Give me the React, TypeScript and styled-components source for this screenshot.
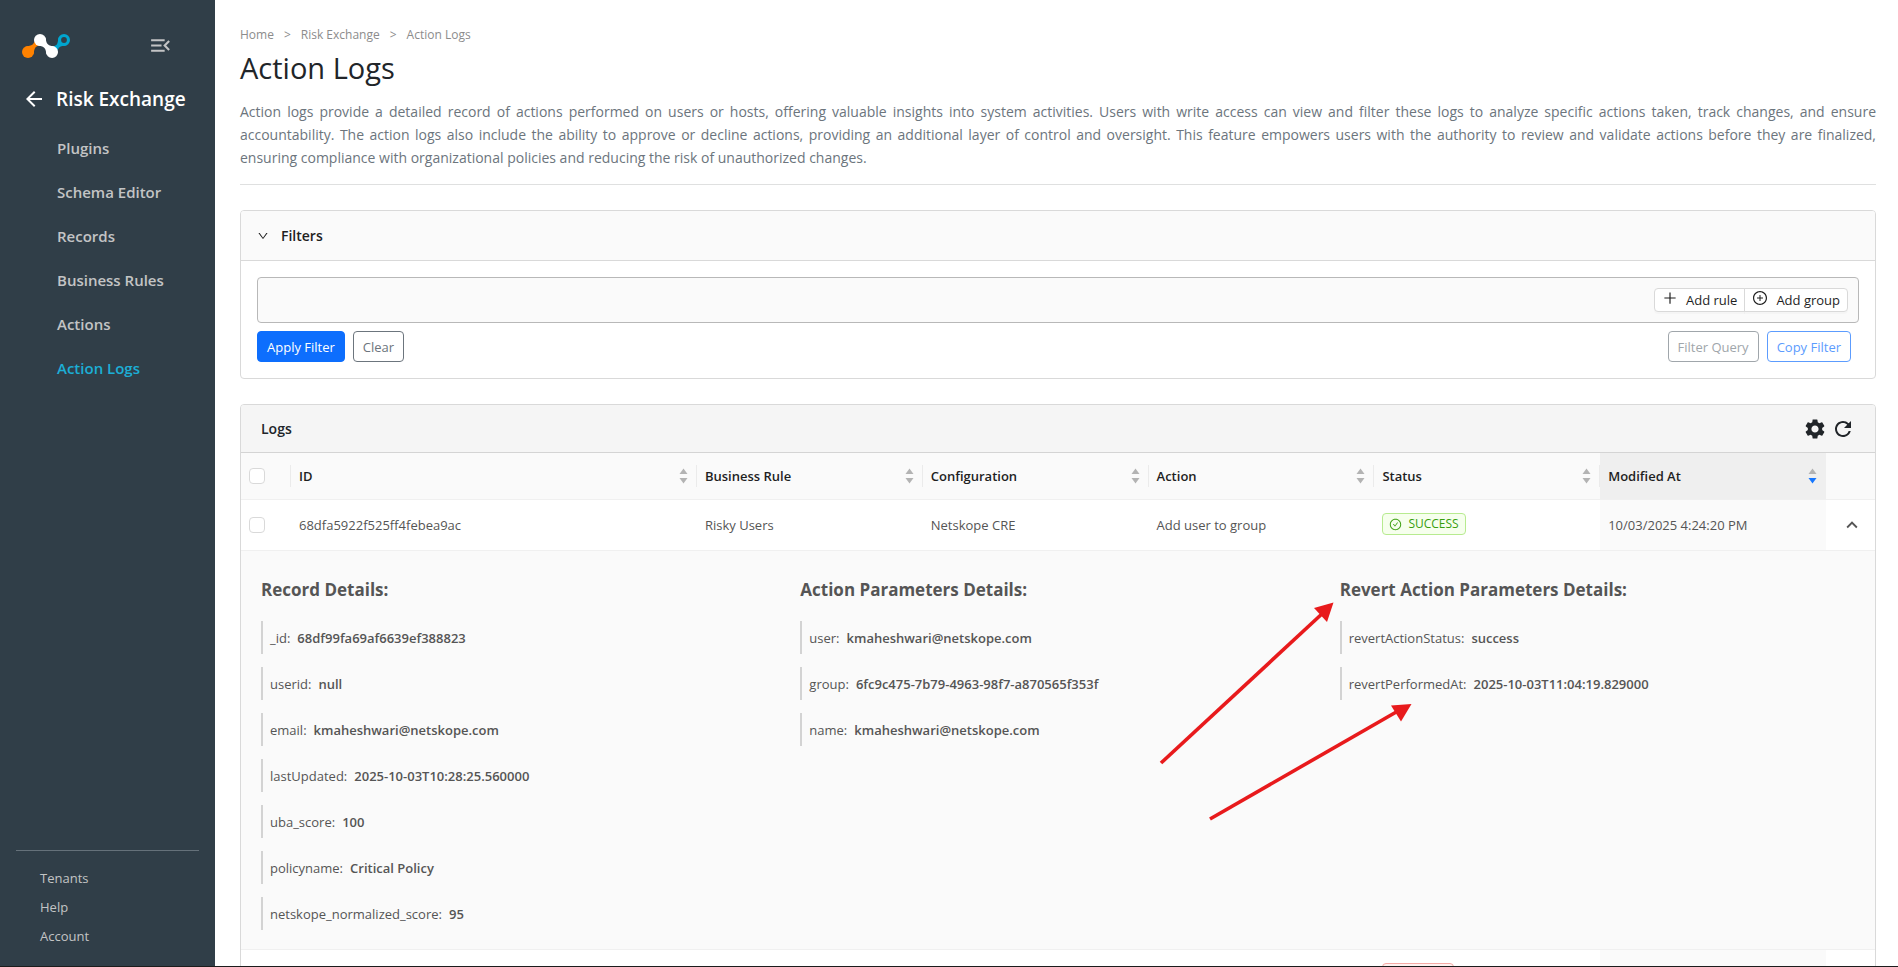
import React from "react";
import styled, { createGlobalStyle, css } from "styled-components";
import {
  MdArrowBack,
  MdExpandLess,
  MdMenuOpen,
  MdRefresh,
  MdSettings,
} from "react-icons/md";
import {
  AiOutlineCheckCircle,
  AiOutlineDown,
  AiOutlinePlus,
  AiOutlinePlusCircle,
} from "react-icons/ai";

const GlobalStyle = createGlobalStyle`
  *, *::before, *::after { box-sizing: border-box; }
  body {
    margin: 0;
    background: #fff;
    color: #212529;
    font-family: "Segoe UI", "Open Sans", "Noto Sans", sans-serif;
    font-size: 13px;
    line-height: 20px;
  }
  button, input { font: inherit; }
  h1, h2, h3, p, ul, ol, dl, dd { margin: 0; padding: 0; }
  ul, ol { list-style: none; }
`;

const Shell = styled.div`
  display: grid;
  grid-template-columns: 215px minmax(0, 1fr);
  height: 100vh;
  overflow: hidden;
  border-bottom: 1px solid #1c1c1c;
`;

/* Sidebar */

const Sidebar = styled.aside`
  display: flex;
  flex-direction: column;
  background: #303e48;
  color: #c3c4c5;
`;

const Brand = styled.div`
  display: flex;
  justify-content: space-between;
  align-items: flex-start;
  padding: 33px 42px 0 21px;
`;

const IconButton = styled.button`
  display: inline-flex;
  padding: 0;
  border: 0;
  background: none;
  color: inherit;
  vertical-align: middle;
  cursor: pointer;
`;

const SectionLink = styled.a`
  display: flex;
  align-items: center;
  gap: 10px;
  height: 28px;
  margin: 26px 0 13px;
  padding-left: 22px;
  color: #fff;
  font-size: 19px;
  font-weight: 600;
  text-decoration: none;
  white-space: nowrap;
`;

const NavLink = styled.a<{ $active?: boolean }>`
  display: flex;
  align-items: center;
  height: 44px;
  padding-left: 57px;
  color: ${(p) => (p.$active ? "#1caed6" : "#c3c4c5")};
  font-size: 15px;
  font-weight: 600;
  text-decoration: none;
`;

const FooterNav = styled.nav`
  margin: auto 16px 16px;
  padding-top: 12px;
  border-top: 1px solid #65717a;
`;

const FooterLink = styled.a`
  display: flex;
  align-items: center;
  height: 29px;
  padding-left: 24px;
  color: #c3c4c5;
  font-size: 13px;
  text-decoration: none;
`;

/* Page header */

const Main = styled.main`
  min-width: 0;
  padding: 25px 22px 0 25px;
  overflow: hidden;
`;

const Crumbs = styled.ol`
  display: flex;
  gap: 10px;
  color: #8c8c8c;
  font-size: 12px;
`;

const CrumbLink = styled.a`
  color: inherit;
  text-decoration: none;
`;

const Title = styled.h1`
  margin: 4px 0 13px;
  font-size: 29px;
  font-weight: 400;
  line-height: 38px;
`;

const Intro = styled.p`
  padding-bottom: 15px;
  border-bottom: 1px solid #dfe0e0;
  color: #6c757d;
  font-size: 14px;
  line-height: 23px;
  text-align: justify;
`;

const KeepTogether = styled.span`
  white-space: nowrap;
`;

/* Cards */

const Card = styled.section`
  margin-top: 25px;
  border: 1px solid #d9d9d9;
  border-radius: 4px;
  overflow: hidden;
`;

const FilterToggle = styled.button`
  display: flex;
  align-items: center;
  gap: 12px;
  width: 100%;
  height: 50px;
  padding: 0 16px;
  border: 0;
  border-bottom: 1px solid #d9d9d9;
  background: #fafafa;
  color: #1f1f1f;
  font-size: 14px;
  font-weight: 600;
`;

const FilterBody = styled.div`
  padding: 16px;
`;

const QueryBox = styled.div`
  display: flex;
  justify-content: flex-end;
  align-items: center;
  height: 46px;
  padding: 0 10px;
  border: 1px solid #b8b8b8;
  border-radius: 4px;
  background: #fafafa;
`;

const RuleButton = styled.button`
  display: inline-flex;
  align-items: center;
  gap: 8px;
  height: 24px;
  padding: 0 7px;
  border: 1px solid #d9d9d9;
  background: #fff;
  color: #1f1f1f;
  box-shadow: 0 2px 0 rgba(0, 0, 0, 0.02);

  &:first-child {
    border-radius: 4px 0 0 4px;
  }
  &:last-child {
    margin-left: -1px;
    border-radius: 0 4px 4px 0;
  }
  svg {
    margin-bottom: 4px;
  }
`;

const ButtonRow = styled.div`
  display: flex;
  gap: 8px;
  margin-top: 8px;
  padding-right: 8px;
`;

const Spacer = styled.span`
  flex: 1;
`;

const tones = {
  primary: css`
    border-color: #0d6efd;
    background: #0d6efd;
    color: #fff;
  `,
  secondary: css`
    border-color: #6c757d;
    background: #fff;
    color: #6c757d;
  `,
  mutedSecondary: css`
    border-color: #a0a6ab;
    background: #fff;
    color: #a0a6ab;
  `,
  mutedPrimary: css`
    border-color: #5c9cfe;
    background: #fff;
    color: #5c9cfe;
  `,
};

const Button = styled.button<{ $tone: keyof typeof tones }>`
  height: 31px;
  padding: 0 9px;
  border: 1px solid;
  border-radius: 4px;
  ${(p) => tones[p.$tone]}
`;

const LogsHeader = styled.header`
  display: flex;
  justify-content: space-between;
  align-items: center;
  height: 48px;
  padding: 0 20px;
  border-bottom: 1px solid #d4d4d4;
  background: #f5f5f5;
`;

const LogsTitle = styled.h2`
  font-size: 14px;
  font-weight: 600;
`;

const Tools = styled.div`
  display: flex;
  gap: 4px;
`;

/* Table */

const Table = styled.table`
  width: 100%;
  table-layout: fixed;
  border-collapse: separate;
  border-spacing: 0;
  color: #555;
`;

const Col = styled.col<{ $width?: string }>`
  width: ${(p) => p.$width ?? "auto"};
`;

const Th = styled.th<{ $sorted?: boolean }>`
  position: relative;
  height: 47px;
  padding: 0 9px 0 8px;
  border-bottom: 1px solid #f0f0f0;
  background: ${(p) => (p.$sorted ? "#efefef" : "#fafafa")};
  color: #1f1f1f;
  font-weight: 600;
  text-align: left;

  &:not(:nth-last-child(-n + 2))::after {
    content: "";
    position: absolute;
    top: 12px;
    right: 0;
    width: 1px;
    height: 22px;
    background: #ebebeb;
  }
`;

const ThInner = styled.div`
  display: flex;
  justify-content: space-between;
  align-items: center;
`;

const Td = styled.td<{ $sorted?: boolean }>`
  height: 51px;
  padding: 0 8px;
  border-bottom: 1px solid #f0f0f0;
  background: ${(p) => (p.$sorted ? "#fafafa" : "#fff")};
`;

const ToggleTd = styled(Td)`
  padding: 0 12px 0 0;
  text-align: right;
`;

const Checkbox = styled.input`
  display: block;
  width: 16px;
  height: 16px;
  margin: 0;
  appearance: none;
  border: 1px solid #d9d9d9;
  border-radius: 4px;
  background: #fff;
`;

const Tag = styled.span<{ $error?: boolean }>`
  display: flex;
  align-items: center;
  gap: 6px;
  width: fit-content;
  min-width: 72px;
  height: 22px;
  margin-bottom: 2px;
  padding: 0 6px;
  border: 1px solid ${(p) => (p.$error ? "#f5aaa5" : "#b7eb8f")};
  border-radius: 4px;
  background: ${(p) => (p.$error ? "#fff1f0" : "#f6ffed")};
  color: ${(p) => (p.$error ? "#cf1322" : "#389e0d")};
  font-size: 12px;
`;

const DetailsCell = styled.td`
  padding: 0 8px;
  border-bottom: 1px solid #f0f0f0;
  background: #fafafa;
`;

const DetailsGrid = styled.div`
  display: grid;
  grid-template-columns: repeat(3, minmax(0, 1fr));
  padding: 26px 0 19px;
`;

const DetailsColumn = styled.section`
  position: relative;
  padding: 0 12px;
`;

const DetailsTitle = styled.h3`
  margin-bottom: 18px;
  font-size: 17px;
  font-weight: 700;
  line-height: 26px;
`;

const DetailsList = styled.dl`
  display: grid;
  gap: 13px;
`;

const DetailsItem = styled.div`
  display: flex;
  align-items: center;
  gap: 7px;
  height: 33px;
  padding-left: 7px;
  border-left: 2px solid #d3d3d3;
`;

const DetailsValue = styled.dd`
  font-weight: 600;
`;

const Arrows = styled.svg`
  position: absolute;
  top: 20px;
  left: -172px;
  pointer-events: none;
`;

function Logo() {
  return (
    <svg width="50" height="26" viewBox="0 0 50 26" role="img" aria-label="Netskope">
      <g fill="#00a5cf" transform="translate(43 7) rotate(135)">
        <circle r="6" />
        <path d="M2-5.600C5-4 6-2.200 9-1.800L13-3V3L9 1.800C6 2.200 5 4 2 5.600z" />
      </g>
      <circle cx="43" cy="7" r="2.900" fill="#303e48" />
      <g fill="#ff8200" transform="translate(7 19) rotate(-45)">
        <circle r="6" />
        <path d="M2-5.600C5-4 6-2.200 9-2L13-3V3L9 2C6 2.200 5 4 2 5.600z" />
      </g>
      <g fill="#fff" transform="translate(19 7) rotate(45)">
        <circle r="6" />
        <circle cx="17" r="6" />
        <path d="M2-5.600C5-4 6-2.600 8.500-2.600S12-4 15-5.600V5.600C12 4 11 2.600 8.500 2.600S5 4 2 5.600z" />
      </g>
    </svg>
  );
}

function SortIcon({ descending }: { descending?: boolean }) {
  return (
    <svg width="9" height="16" viewBox="0 0 9 16" aria-hidden="true">
      <path d="M4.500 0.500 8.500 6H.5z" fill="#b3b3b3" />
      <path d="M4.500 15.500 8.500 10H.5z" fill={descending ? "#1677ff" : "#b3b3b3"} />
    </svg>
  );
}

const navItems = [
  "Plugins",
  "Schema Editor",
  "Records",
  "Business Rules",
  "Actions",
  "Action Logs",
];

const columns = [
  "ID",
  "Business Rule",
  "Configuration",
  "Action",
  "Status",
  "Modified At",
];

const details: { title: string; items: [string, string][] }[] = [
  {
    title: "Record Details:",
    items: [
      ["_id", "68df99fa69af6639ef388823"],
      ["userid", "null"],
      ["email", "kmaheshwari@netskope.com"],
      ["lastUpdated", "2025-10-03T10:28:25.560000"],
      ["uba_score", "100"],
      ["policyname", "Critical Policy"],
      ["netskope_normalized_score", "95"],
    ],
  },
  {
    title: "Action Parameters Details:",
    items: [
      ["user", "kmaheshwari@netskope.com"],
      ["group", "6fc9c475-7b79-4963-98f7-a870565f353f"],
      ["name", "kmaheshwari@netskope.com"],
    ],
  },
  {
    title: "Revert Action Parameters Details:",
    items: [
      ["revertActionStatus", "success"],
      ["revertPerformedAt", "2025-10-03T11:04:19.829000"],
    ],
  },
];

function CalloutArrows() {
  return (
    <Arrows width="270" height="230" viewBox="0 0 270 230" aria-hidden="true">
      <g stroke="#e81a1c" strokeWidth="3.6" fill="none">
        <path d="M5 166 168 15" />
        <path d="M54 222 242 114" />
      </g>
      <g fill="#e81a1c">
        <path d="M177.500 5.500 158 11l13 14z" />
        <path d="M255.500 107 235 108.500l10 16z" />
      </g>
    </Arrows>
  );
}

export default function App() {
  return (
    <>
      <GlobalStyle />
      <Shell>
        <Sidebar>
          <Brand>
            <Logo />
            <IconButton type="button" aria-label="Collapse menu">
              <MdMenuOpen size={25} />
            </IconButton>
          </Brand>
          <SectionLink href="#modules">
            <MdArrowBack size={24} />
            Risk Exchange
          </SectionLink>
          <nav>
            {navItems.map((item) => (
              <NavLink key={item} href="#nav" $active={item === "Action Logs"}>
                {item}
              </NavLink>
            ))}
          </nav>
          <FooterNav>
            <FooterLink href="#tenants">Tenants</FooterLink>
            <FooterLink href="#help">Help</FooterLink>
            <FooterLink href="#account">Account</FooterLink>
          </FooterNav>
        </Sidebar>

        <Main>
          <Crumbs>
            <li><CrumbLink href="#home">Home</CrumbLink></li>
            <li>&gt;</li>
            <li><CrumbLink href="#risk-exchange">Risk Exchange</CrumbLink></li>
            <li>&gt;</li>
            <li>Action Logs</li>
          </Crumbs>
          <Title>Action Logs</Title>
          <Intro>
            Action logs provide a detailed record of actions performed on users or
            hosts, offering valuable insights into system activities. Users with
            write access can view and filter these logs to analyze specific actions
            taken, track changes, and ensure accountability. The action logs also
            include the ability to approve or decline actions, providing an
            additional layer of control and oversight. This feature empowers users
            with the authority to review and validate actions before they are
            finalized, <KeepTogether>ensuring compliance</KeepTogether> with
            organizational policies and reducing the risk of unauthorized changes.
          </Intro>

          <Card>
            <FilterToggle type="button" aria-expanded="true">
              <AiOutlineDown size={12} />
              Filters
            </FilterToggle>
            <FilterBody>
              <QueryBox>
                <RuleButton type="button">
                  <AiOutlinePlus size={16} />
                  Add rule
                </RuleButton>
                <RuleButton type="button">
                  <AiOutlinePlusCircle size={16} />
                  Add group
                </RuleButton>
              </QueryBox>
              <ButtonRow>
                <Button type="button" $tone="primary">Apply Filter</Button>
                <Button type="button" $tone="secondary">Clear</Button>
                <Spacer />
                <Button type="button" $tone="mutedSecondary">Filter Query</Button>
                <Button type="button" $tone="mutedPrimary">Copy Filter</Button>
              </ButtonRow>
            </FilterBody>
          </Card>

          <Card>
            <LogsHeader>
              <LogsTitle>Logs</LogsTitle>
              <Tools>
                <IconButton type="button" aria-label="Settings">
                  <MdSettings size={24} />
                </IconButton>
                <IconButton type="button" aria-label="Refresh">
                  <MdRefresh size={24} />
                </IconButton>
              </Tools>
            </LogsHeader>
            <Table>
              <colgroup>
                <Col $width="50px" />
                <Col />
                <Col $width="13.82%" />
                <Col $width="13.82%" />
                <Col $width="13.82%" />
                <Col $width="13.82%" />
                <Col $width="13.82%" />
                <Col $width="49px" />
              </colgroup>
              <thead>
                <tr>
                  <Th><Checkbox type="checkbox" aria-label="Select all logs" /></Th>
                  {columns.map((name) => (
                    <Th key={name} $sorted={name === "Modified At"}>
                      <ThInner>
                        {name}
                        <SortIcon descending={name === "Modified At"} />
                      </ThInner>
                    </Th>
                  ))}
                  <Th />
                </tr>
              </thead>
              <tbody>
                <tr>
                  <Td><Checkbox type="checkbox" aria-label="Select log" /></Td>
                  <Td>68dfa5922f525ff4febea9ac</Td>
                  <Td>Risky Users</Td>
                  <Td>Netskope CRE</Td>
                  <Td>Add user to group</Td>
                  <Td>
                    <Tag>
                      <AiOutlineCheckCircle size={13} />
                      SUCCESS
                    </Tag>
                  </Td>
                  <Td $sorted>10/03/2025 4:24:20 PM</Td>
                  <ToggleTd>
                    <IconButton type="button" aria-label="Collapse row">
                      <MdExpandLess size={22} />
                    </IconButton>
                  </ToggleTd>
                </tr>
                <tr>
                  <DetailsCell colSpan={8}>
                    <DetailsGrid>
                      {details.map((group, index) => (
                        <DetailsColumn key={group.title}>
                          <DetailsTitle>{group.title}</DetailsTitle>
                          <DetailsList>
                            {group.items.map(([key, value]) => (
                              <DetailsItem key={key}>
                                <dt>{key}:</dt>
                                <DetailsValue>{value}</DetailsValue>
                              </DetailsItem>
                            ))}
                          </DetailsList>
                          {index === 2 && <CalloutArrows />}
                        </DetailsColumn>
                      ))}
                    </DetailsGrid>
                  </DetailsCell>
                </tr>
                <tr>
                  <Td><Checkbox type="checkbox" aria-label="Select log" /></Td>
                  <Td />
                  <Td />
                  <Td />
                  <Td />
                  <Td><Tag $error /></Td>
                  <Td $sorted />
                  <Td />
                </tr>
              </tbody>
            </Table>
          </Card>
        </Main>
      </Shell>
    </>
  );
}
